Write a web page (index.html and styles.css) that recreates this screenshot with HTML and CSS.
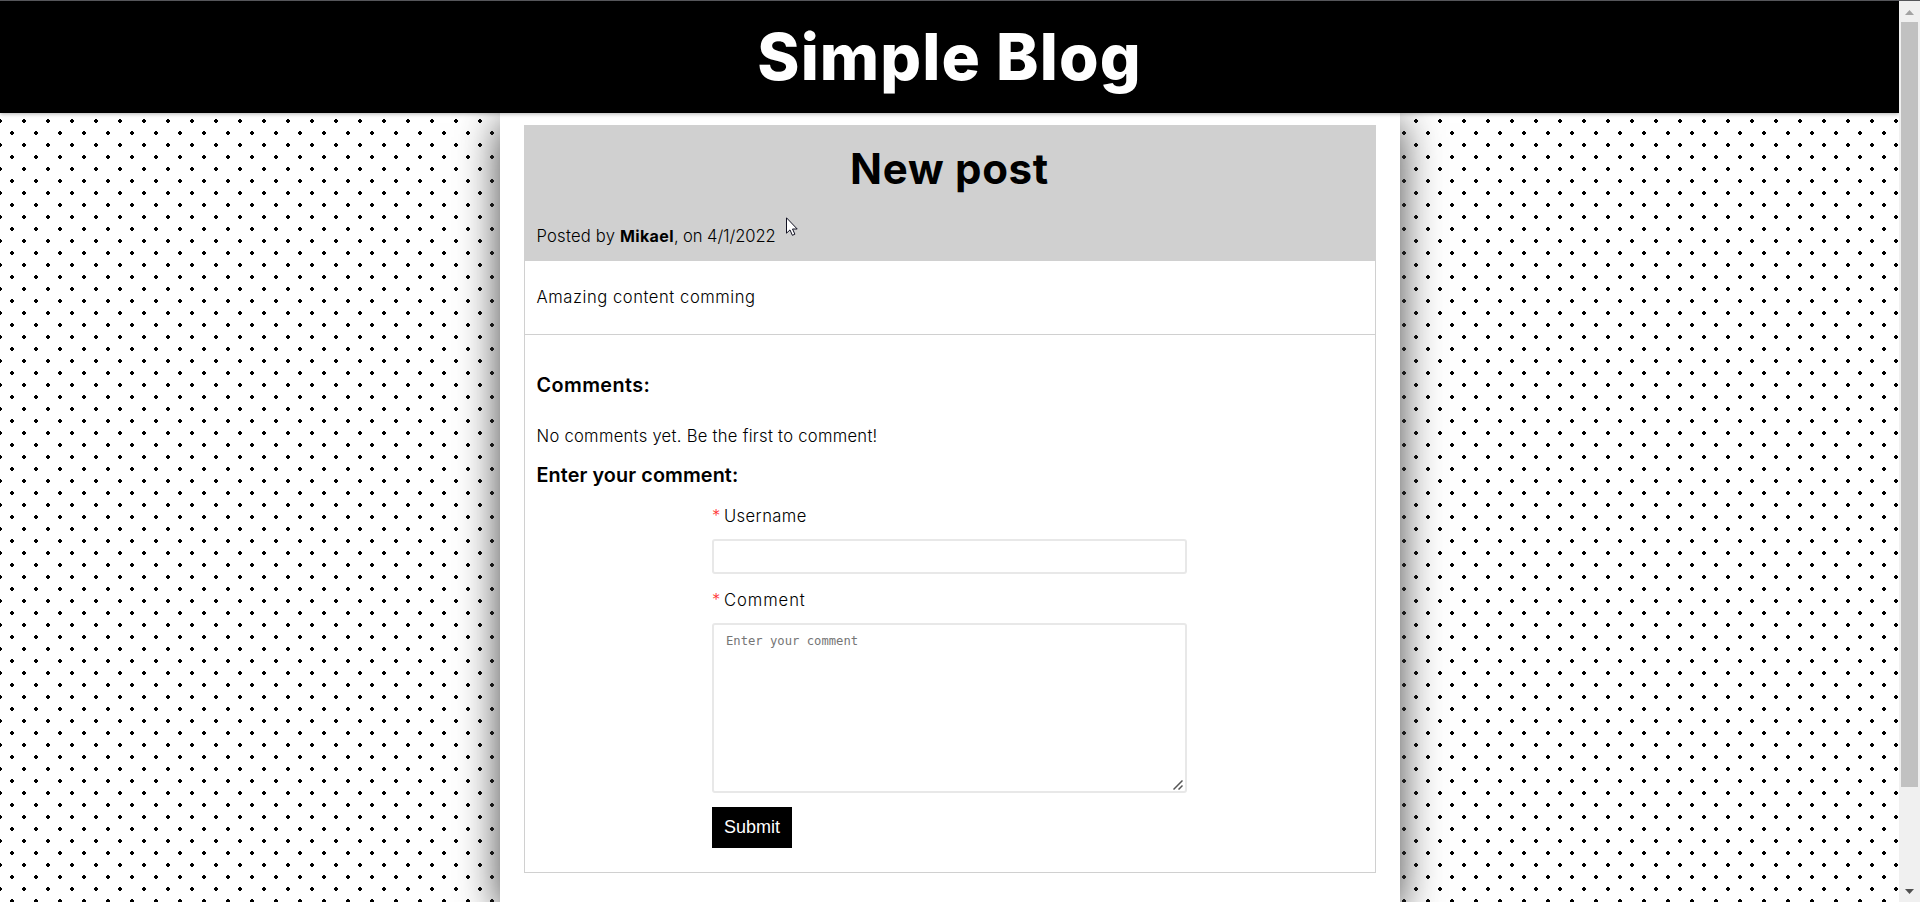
FILE: index.html
```html
<!DOCTYPE html>
<html lang="en">
<head>
<meta charset="utf-8">
<title>Simple Blog</title>
<link rel="stylesheet" href="styles.css">
</head>
<body>
<div class="window">
  <div class="page">
    <header class="site-header"><h1 class="site-title">Simple Blog</h1></header>
    <main class="wrapper">
      <article class="post">
        <div class="post-header">
          <h2 class="post-title">New post</h2>
          <p class="meta"><span class="meta-by">Posted by</span> <b>Mikael</b><span class="meta-date">, on 4/1/2022</span></p>
        </div>
        <div class="post-body"><p class="content">Amazing content comming</p></div>
        <section class="comments">
          <h3 class="heading heading-list">Comments:</h3>
          <p class="empty">No comments yet. Be the first to comment!</p>
          <h3 class="heading">Enter your comment:</h3>
          <form class="form">
            <label class="label" for="user"><span class="star">*</span><span class="label-user">Username</span></label>
            <input class="input" id="user" type="text">
            <label class="label" for="comment"><span class="star">*</span><span class="label-comment">Comment</span></label>
            <div class="area">
              <textarea class="textarea" id="comment" placeholder="Enter your comment"></textarea>
              <svg class="grip" width="10" height="10" viewBox="0 0 10 10"><path d="M0.5 9.5L9.5 0.5M5.5 9.5L9.5 5.5" stroke="#555" stroke-width="1.5" fill="none"/></svg>
            </div>
            <button class="submit" type="button">Submit</button>
          </form>
        </section>
      </article>
    </main>
  </div>
  <div class="scrollbar">
    <svg class="arrow" width="9" height="5" viewBox="0 0 9 5"><path d="M0 5L4.5 0L9 5Z" fill="#a3a3a3"/></svg>
    <div class="thumb"></div>
    <svg class="arrow arrow-down" width="9" height="5" viewBox="0 0 9 5"><path d="M0 0L4.5 5L9 0Z" fill="#505050"/></svg>
  </div>
  <svg class="cursor" width="12" height="20" viewBox="0 0 12 20"><path d="M.5 .8V16.2L4 12.9L6.4 18.3L8.9 17.2L6.5 12H11.2Z" fill="#fff" stroke="#111122" stroke-width="1"/></svg>
</div>
</body>
</html>
```
FILE: styles.css
```css
* { box-sizing: border-box; }
body { margin: 0; font-family: Inter, sans-serif; color: #000; }
h1, h2, h3, p { margin: 0; }
.window { position: relative; display: flex; height: 902px; overflow: hidden; border-top: 1px solid #55565a; }
.page {
  flex: 1; display: flex; flex-direction: column; align-items: center; overflow: hidden;
  background-color: #fff;
  background-image: radial-gradient(#000 2px, transparent 2px), radial-gradient(#000 2px, transparent 2px);
  background-size: 24px 24px; background-position: 0 0, 12px 12px;
}
.site-header { position: relative; z-index: 1; width: 100%; height: 112px; flex: none; background: #000; color: #fff; text-align: center; box-shadow: 0 1px 4px rgba(0,0,0,.3); }
.site-title { font-size: 64px; line-height: 112px; font-weight: 800; letter-spacing: 1.1px; white-space: nowrap; }
.wrapper { width: 900px; flex: 1; background: #fff; padding: 12px 24px; box-shadow: 0 10px 40px #444; }
.post { height: 748px; border: 1px solid #d0d0d0; }
.post-header { height: 135px; background: #d0d0d0; padding: 0 12px; }
.post-title { font-size: 42px; line-height: 85px; text-align: center; font-weight: 700; letter-spacing: .7px; }
.meta { font-size: 16.6px; line-height: 24px; padding-top: 13px; white-space: nowrap; }
.meta, .content, .empty, .label { font-weight: 300; }
.meta b { font-size: 16px; font-weight: 700; letter-spacing: .4px; }
.meta-by { letter-spacing: .22px; }
.meta-date { letter-spacing: -.1px; }
.post-body { height: 74px; border-bottom: 1px solid #d0d0d0; padding: 24px 12px; }
.content { font-size: 16.6px; line-height: 24px; letter-spacing: .55px; }
.comments { padding: 36px 12px 0; }
.heading { font-size: 19.8px; line-height: 28px; font-weight: 600; letter-spacing: .1px; }
.heading-list { letter-spacing: .4px; }
.empty { font-size: 16.6px; line-height: 24px; margin: 25px 0 13px; letter-spacing: .28px; }
.form { width: 475px; margin: 15px auto 0; display: flex; flex-direction: column; align-items: flex-start; }
.label { display: flex; gap: 5px; font-size: 16.6px; line-height: 24px; height: 24px; margin-bottom: 11px; }
.label-user { letter-spacing: .4px; }
.label-comment { letter-spacing: .93px; }
.star { color: #f33; width: 7px; }
.input { width: 475px; height: 35px; border: 2px solid #e8e8e8; border-radius: 3px; margin-bottom: 14px; background: #fff; }
.area { position: relative; width: 475px; height: 170px; margin-bottom: 14px; }
.textarea { display: block; width: 100%; height: 100%; border: 2px solid #e8e8e8; border-radius: 3px; resize: none; padding: 8px 12px; font: 12.2px/16px "DejaVu Sans Mono", monospace; }
.textarea::placeholder { color: #757575; }
.grip { position: absolute; right: 4px; bottom: 3px; }
.submit { width: 80px; height: 41px; border: 0; padding: 0; background: #000; color: #fff; font: 18px "Liberation Sans", sans-serif; }
.scrollbar { width: 21px; background: #f0f0f0; display: flex; flex-direction: column; align-items: center; padding: 9px 0 8px; }
.arrow { flex: none; }
.arrow-down { margin-top: auto; }
.thumb { width: 17px; height: 765px; margin-top: 7px; background: #c1c1c1; }
.cursor { position: absolute; left: 786px; top: 216px; }
```
